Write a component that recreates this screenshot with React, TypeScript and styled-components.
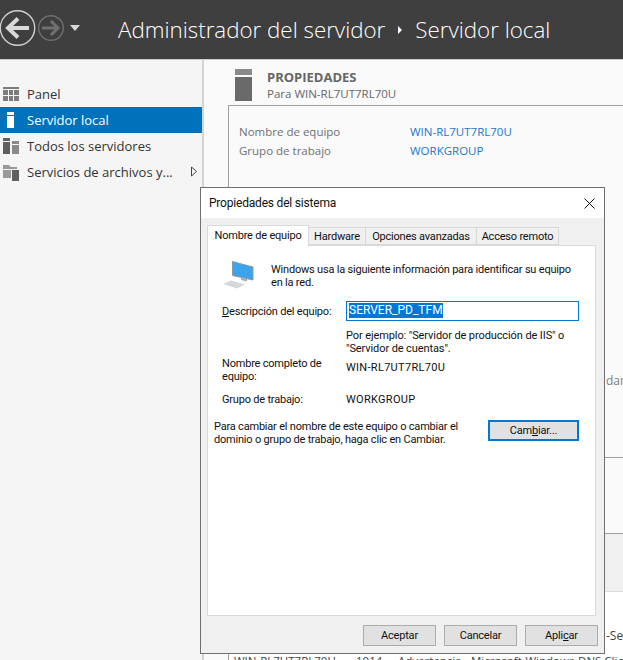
import { createGlobalStyle, styled } from "styled-components";

const GlobalStyle = createGlobalStyle`
  html, body {
    margin: 0;
    padding: 0;
    background: #fafafa;
    overflow: hidden;
  }
  #root {
    width: 623px;
    height: 660px;
  }
`;

const Page = styled.div`
  position: relative;
  width: 623px;
  height: 660px;
  display: flex;
  flex-direction: column;
  overflow: hidden;
  font-family: "Open Sans", "Noto Sans", sans-serif;
  background: #fafafa;
`;

const Header = styled.header`
  height: 59px;
  flex: none;
  display: flex;
  align-items: center;
  background: #3f3f3f;
  border-bottom: 1px solid #c9c9c9;
`;

const NavIcons = styled.svg`
  width: 82px;
  height: 59px;
  flex: none;
`;

const Crumbs = styled.div`
  margin-left: 36px;
  display: flex;
  align-items: center;
  color: #fff;
  font-size: 22.35px;
  font-weight: 300;
  white-space: nowrap;
`;

const CrumbArrow = styled.span`
  width: 0;
  height: 0;
  margin: 0 13px 0 13px;
  border-left: 4px solid #fff;
  border-top: 4px solid transparent;
  border-bottom: 4px solid transparent;
`;

const Body = styled.div`
  flex: 1;
  display: flex;
  min-height: 0;
`;

const Sidebar = styled.nav`
  width: 202px;
  flex: none;
  padding-top: 21px;
  background: #f5f5f5;
  border-right: 2px solid #d4d4d4;
`;

const NavRow = styled.div<{ $active?: boolean }>`
  position: relative;
  height: 26px;
  display: flex;
  align-items: center;
  gap: 8px;
  padding-left: 3px;
  font-size: 13px;
  color: ${(p) => (p.$active ? "#fff" : "#333")};
  background: ${(p) => (p.$active ? "#0072bc" : "transparent")};
`;

const NavIcon = styled.svg`
  width: 16px;
  height: 18px;
  flex: none;
`;

const NavArrow = styled.svg`
  position: absolute;
  left: 190px;
  top: 7px;
  width: 8px;
  height: 11px;
`;

const Main = styled.main`
  flex: 1;
  min-width: 0;
  padding: 9px 0 0 24px;
  overflow: hidden;
`;

const SectionHead = styled.div`
  display: flex;
  gap: 15px;
  padding-left: 7px;
  height: 36px;
`;

const ServerIcon = styled.svg`
  width: 17px;
  height: 32px;
  flex: none;
`;

const SectionText = styled.div`
  color: #666;
`;

const SectionTitle = styled.div`
  font-size: 13px;
  line-height: 16px;
  font-weight: 700;
`;

const SectionSub = styled.div`
  font-size: 11.5px;
  line-height: 17px;
`;

const Column = styled.div`
  border-left: 1px solid #a0a0a0;
`;

const PropsPanel = styled.div`
  height: 353px;
  box-sizing: border-box;
  padding: 16px 0 0 10px;
  border-top: 1px solid #a0a0a0;
  border-bottom: 1px solid #a0a0a0;
`;

const PropRow = styled.div`
  display: grid;
  grid-template-columns: 171px 1fr;
  height: 19px;
  font-size: 11.5px;
  line-height: 19px;
  color: #707070;
`;

const PropLink = styled.span`
  color: #1b78c8;
`;

const BehindText = styled.div<{ $top: number; $left: number; $muted?: boolean }>`
  margin: ${(p) => p.$top}px 0 0 ${(p) => p.$left}px;
  height: 16px;
  font-size: 12px;
  line-height: 16px;
  color: ${(p) => (p.$muted ? "#808080" : "#444")};
  white-space: nowrap;
`;

const Spacer = styled.div`
  height: 75px;
  border-bottom: 1px solid #a0a0a0;
`;

const GridBand = styled.div`
  height: 57px;
  background: #f0f0f0;
  border-bottom: 1px solid #dcdcdc;
`;

const LogList = styled.div`
  height: 100px;
  background: #fff;
  overflow: hidden;
`;

const LogRow = styled.div`
  display: grid;
  grid-template-columns: 122px 42px 73px 1fr;
  margin: 10px 0 0 5px;
  font-size: 11.5px;
  line-height: 14px;
  color: #444;
  white-space: nowrap;
`;

const Dialog = styled.section`
  position: absolute;
  left: 200px;
  top: 187px;
  width: 405px;
  height: 467px;
  display: flex;
  flex-direction: column;
  box-sizing: border-box;
  background: #f0f0f0;
  border: 1px solid #707070;
  font-family: Roboto, "Noto Sans", sans-serif;
  font-size: 11px;
  letter-spacing: -0.2px;
  color: #111;
`;

const TitleBar = styled.div`
  height: 30px;
  flex: none;
  display: flex;
  align-items: center;
  justify-content: space-between;
  padding: 0 9px 0 8px;
  background: #fff;
  font-size: 12px;
`;

const CloseIcon = styled.svg`
  width: 11px;
  height: 11px;
`;

const Tabs = styled.div`
  display: flex;
  align-items: flex-end;
  height: 27px;
  flex: none;
  padding-left: 6px;
`;

const Tab = styled.div<{ $active?: boolean; $width: number }>`
  position: relative;
  width: ${(p) => p.$width}px;
  height: ${(p) => (p.$active ? "21px" : "18px")};
  margin-bottom: ${(p) => (p.$active ? "-1px" : "0")};
  box-sizing: border-box;
  line-height: ${(p) => (p.$active ? "19px" : "18px")};
  text-align: center;
  white-space: nowrap;
  background: ${(p) => (p.$active ? "#fff" : "#f0f0f0")};
  border: 1px solid #d9d9d9;
  border-left-width: ${(p) => (p.$active ? "1px" : "0")};
  border-bottom-width: ${(p) => (p.$active ? "0" : "1px")};
`;

const TabPanel = styled.div`
  flex: 1;
  margin: 0 8px 0 6px;
  padding: 14px 16px 0 6px;
  background: #fff;
  border: 1px solid #d9d9d9;
  display: flex;
  flex-direction: column;
`;

const Intro = styled.div`
  display: flex;
  gap: 17px;
  height: 41px;
  padding-left: 9px;
  line-height: 13px;
`;

const IntroText = styled.div`
  padding-top: 3px;
  white-space: nowrap;
`;

const PcIcon = styled.svg`
  width: 31px;
  height: 29px;
  flex: none;
`;

const FormRow = styled.div<{ $height: number }>`
  display: grid;
  grid-template-columns: 124px 1fr;
  padding-left: 8px;
  height: ${(p) => p.$height}px;
  line-height: 13px;
  white-space: nowrap;
`;

const Cell = styled.span<{ $top?: number }>`
  padding-top: ${(p) => p.$top ?? 0}px;
`;

const ValueCell = styled(Cell)`
  letter-spacing: 0.3px;
`;

const ExampleCell = styled.span`
  letter-spacing: -0.1px;
`;

const DescInput = styled.div`
  height: 20px;
  box-sizing: border-box;
  border: 1px solid #0078d7;
  padding: 1px 2px 0;
  font-size: 12px;
  line-height: 15px;
  letter-spacing: 0;
`;

const Selected = styled.span`
  display: inline-block;
  background: #0078d7;
  color: #fff;
`;

const ChangeRow = styled.div`
  display: flex;
  justify-content: space-between;
  margin-top: 7px;
  line-height: 13px;
  white-space: nowrap;
`;

const PushButton = styled.button<{ $focused?: boolean }>`
  width: ${(p) => (p.$focused ? "91px" : "73px")};
  height: 21px;
  padding: 0;
  box-sizing: border-box;
  font: inherit;
  letter-spacing: inherit;
  color: #111;
  background: #e1e1e1;
  border: ${(p) => (p.$focused ? "2px solid #0078d7" : "1px solid #adadad")};
`;

const Footer = styled.div`
  height: 37px;
  flex: none;
  box-sizing: border-box;
  display: flex;
  justify-content: flex-end;
  gap: 8px;
  padding: 9px 6px 0 0;
`;

const Key = styled.u`
  text-decoration: underline;
`;

export default function App() {
  return (
    <Page>
      <GlobalStyle />
      <Header>
        <NavIcons viewBox="0 0 82 59">
          <circle cx="17.5" cy="28" r="17.2" fill="none" stroke="#cfcfcf" strokeWidth="1.4" />
          <path d="M29 28H9M18 18.5L8 28L18 37.5" fill="none" stroke="#d8d8d8" strokeWidth="4" />
          <circle cx="51" cy="28" r="12.3" fill="none" stroke="#6f6f6f" strokeWidth="1.4" />
          <path d="M42 28H57M51 21L58 28L51 35" fill="none" stroke="#707070" strokeWidth="3" />
          <path d="M70 25H80L75 31Z" fill="#d8d8d8" />
        </NavIcons>
        <Crumbs>
          Administrador del servidor
          <CrumbArrow />
          Servidor local
        </Crumbs>
      </Header>
      <Body>
        <Sidebar>
          <NavRow>
            <NavIcon viewBox="0 0 16 18">
              <path d="M0 2h16v2H0zM0 5h5v5H0zM6 5h4v5H6zM11 5h5v5h-5zM0 11h5v5H0zM6 11h4v5H6zM11 11h5v5h-5z" fill="#7c7c7c" />
            </NavIcon>
            Panel
          </NavRow>
          <NavRow $active>
            <NavIcon viewBox="0 0 16 18">
              <path d="M4 1h7v3H4zM4 5h7v12H4z" fill="#fff" />
            </NavIcon>
            Servidor local
          </NavRow>
          <NavRow>
            <NavIcon viewBox="0 0 16 18">
              <path d="M0 1h7v3H0zM0 5h7v12H0z" fill="#5f5f5f" />
              <path d="M9 4h7v3H9zM9 8h7v9H9z" fill="#8a8a8a" />
            </NavIcon>
            Todos los servidores
          </NavRow>
          <NavRow>
            <NavIcon viewBox="0 0 16 18">
              <path d="M0 2h6l2 2h6v2H0zM0 7h8v8H0z" fill="#999" />
              <path d="M9 7h7v11H9z" fill="#5f5f5f" />
            </NavIcon>
            Servicios de archivos y...
            <NavArrow viewBox="0 0 8 11">
              <path d="M1.5 1L6.5 5.5L1.5 10Z" fill="none" stroke="#444" strokeWidth="1" />
            </NavArrow>
          </NavRow>
        </Sidebar>
        <Main>
          <SectionHead>
            <ServerIcon viewBox="0 0 17 32">
              <path d="M0 0h17v6H0z" fill="#8a8a8a" />
              <path d="M0 8h17v24H0z" fill="#6a6a6a" />
            </ServerIcon>
            <SectionText>
              <SectionTitle>PROPIEDADES</SectionTitle>
              <SectionSub>Para WIN-RL7UT7RL70U</SectionSub>
            </SectionText>
          </SectionHead>
          <Column>
            <PropsPanel>
              <PropRow>
                <span>Nombre de equipo</span>
                <PropLink>WIN-RL7UT7RL70U</PropLink>
              </PropRow>
              <PropRow>
                <span>Grupo de trabajo</span>
                <PropLink>WORKGROUP</PropLink>
              </PropRow>
              <BehindText $top={213} $left={367} $muted>
                dard
              </BehindText>
            </PropsPanel>
            <Spacer />
            <GridBand />
            <LogList>
              <BehindText $top={36} $left={377}>
                -Se
              </BehindText>
              <LogRow>
                <span>WIN-RL7UT7RL70U</span>
                <span>1014</span>
                <span>Advertencia</span>
                <span>Microsoft-Windows-DNS Client</span>
              </LogRow>
            </LogList>
          </Column>
        </Main>
      </Body>
      <Dialog>
        <TitleBar>
          Propiedades del sistema
          <CloseIcon viewBox="0 0 11 11">
            <path d="M0.5 0.5L10.5 10.5M10.5 0.5L0.5 10.5" stroke="#111" strokeWidth="1" fill="none" />
          </CloseIcon>
        </TitleBar>
        <Tabs>
          <Tab $active $width={102}>Nombre de equipo</Tab>
          <Tab $width={57}>Hardware</Tab>
          <Tab $width={111}>Opciones avanzadas</Tab>
          <Tab $width={82}>Acceso remoto</Tab>
        </Tabs>
        <TabPanel>
          <Intro>
            <PcIcon viewBox="0 0 31 29">
              <path d="M9.5 1.5L30 7V20L9.5 15.5Z" fill="#3aa5ea" stroke="#8a9aa5" strokeWidth="1" />
              <path d="M18 17.5L24 19V21.5L18 20Z" fill="#a8b0b5" />
              <path d="M0 24L8 20.5L22 24.5L14 28.5Z" fill="#d5d8da" />
            </PcIcon>
            <IntroText>
              Windows usa la siguiente información para identificar su equipo
              <br />
              en la red.
            </IntroText>
          </Intro>
          <FormRow $height={28}>
            <Cell $top={4}>
              <Key>D</Key>escripción del equipo:
            </Cell>
            <DescInput>
              <Selected>SERVER_PD_TFM</Selected>
            </DescInput>
          </FormRow>
          <FormRow $height={28}>
            <span />
            <ExampleCell>
              Por ejemplo: "Servidor de producción de IIS" o
              <br />
              "Servidor de cuentas".
            </ExampleCell>
          </FormRow>
          <FormRow $height={36}>
            <span>
              Nombre completo de
              <br />
              equipo:
            </span>
            <ValueCell $top={4}>WIN-RL7UT7RL70U</ValueCell>
          </FormRow>
          <FormRow $height={20}>
            <span>Grupo de trabajo:</span>
            <ValueCell>WORKGROUP</ValueCell>
          </FormRow>
          <ChangeRow>
            <span>
              Para cambiar el nombre de este equipo o cambiar el
              <br />
              dominio o grupo de trabajo, haga clic en Cambiar.
            </span>
            <PushButton $focused>
              Cam<Key>b</Key>iar...
            </PushButton>
          </ChangeRow>
        </TabPanel>
        <Footer>
          <PushButton>Aceptar</PushButton>
          <PushButton>Cancelar</PushButton>
          <PushButton>
            Apli<Key>c</Key>ar
          </PushButton>
        </Footer>
      </Dialog>
    </Page>
  );
}
